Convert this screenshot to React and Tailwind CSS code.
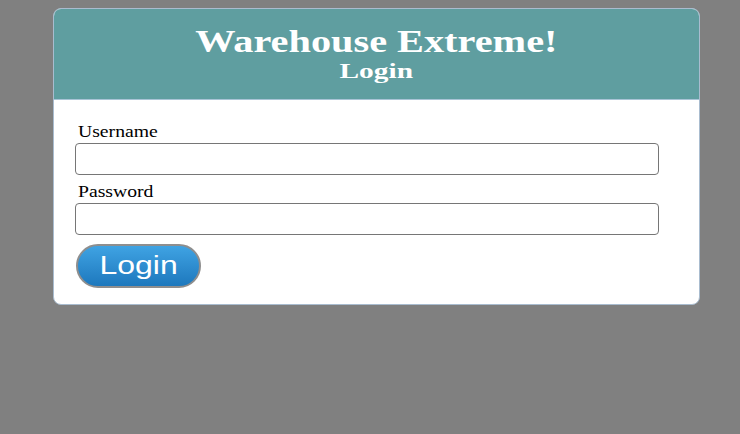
export default function App() {
  return (
    <div className="min-h-screen w-full bg-[#808080] pt-[8px]" style={{ minHeight: 434 }}>
      <div className="ml-[53px] w-[647px] rounded-[8px] border border-[#a9bccf] bg-white overflow-hidden">
        <div className="h-[91px] bg-[#5f9ea0] border-b border-[#a9c4d6] text-center text-white font-bold font-['Liberation_Serif',serif] pt-[16px]">
          <div className="text-[31px] leading-[34px]">
            <span className="inline-block scale-x-[1.3]">Warehouse Extreme!</span>
          </div>
          <div className="text-[21px] leading-[24px]">
            <span className="inline-block scale-x-[1.4]">Login</span>
          </div>
        </div>
        <form className="pl-[21px] pt-[22px] pb-[16px] font-['Liberation_Serif',serif]" onSubmit={e => e.preventDefault()}>
          <label className="block pl-[3px] text-[16px] leading-[20px] text-black">
            <span className="inline-block origin-left scale-x-[1.23]">Username</span>
          </label>
          <input className="block mt-[1px] w-[584px] h-[32px] rounded-[4px] border border-[#767676] bg-white" />
          <label className="block pl-[3px] mt-[7px] text-[16px] leading-[20px] text-black">
            <span className="inline-block origin-left scale-x-[1.23]">Password</span>
          </label>
          <input type="password" className="block mt-[1px] w-[584px] h-[32px] rounded-[4px] border border-[#767676] bg-white" />
          <button className="mt-[9px] ml-[1px] w-[125px] h-[44px] rounded-full border-2 border-[#8e8e8e] bg-gradient-to-b from-[#3fa3e3] to-[#1d78bd] text-white text-[25px] font-['Liberation_Sans',sans-serif] leading-none pb-[2px]">
            <span className="inline-block scale-x-[1.28]">Login</span>
          </button>
        </form>
      </div>
    </div>
  )
}
